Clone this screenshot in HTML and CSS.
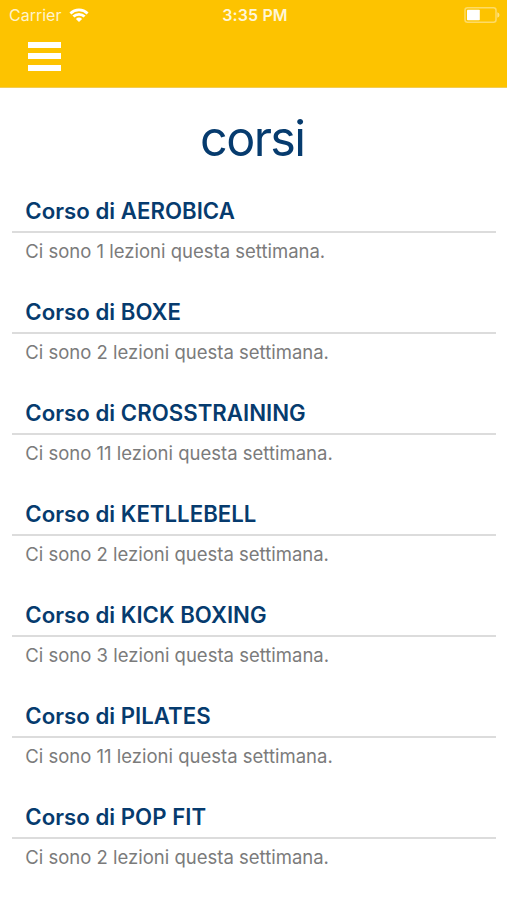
FILE: index.html
```html
<!DOCTYPE html>
<html lang="it">
<head>
<meta charset="utf-8">
<title>corsi</title>
<link rel="stylesheet" href="styles.css">
</head>
<body>
<header class="top">
  <div class="status">
    <div class="carrier"><span>Carrier</span>
      <svg class="wifi" width="20" height="14" viewBox="0 0 20 14"><path d="M10 14 6.9 10.9a4.5 4.5 0 0 1 6.2 0z" fill="#fff"/><path d="M4.4 8.6a8 8 0 0 1 11.2 0M1.4 5.4a12.4 12.4 0 0 1 17.2 0" fill="none" stroke="#fff" stroke-width="2.8"/></svg>
    </div>
    <div class="time">3:35 PM</div>
    <svg class="battery" width="36" height="16" viewBox="0 0 36 16"><rect x="1" y=".8" width="31" height="14.4" rx="2.5" fill="none" stroke="#fff" stroke-opacity=".4" stroke-width="1.5"/><rect x="3" y="2.7" width="12.8" height="10.6" rx=".8" fill="#fff"/><path d="M33.3 5.2q2.2.8 2.2 2.8t-2.2 2.8z" fill="#fff" fill-opacity=".5"/></svg>
  </div>
  <button class="menu" aria-label="Menu"><i></i><i></i><i></i></button>
</header>
<main>
  <h1>corsi</h1>
  <section class="course"><h2>Corso di AEROBICA</h2><p>Ci sono 1 lezioni questa settimana.</p></section>
  <section class="course"><h2>Corso di BOXE</h2><p>Ci sono 2 lezioni questa settimana.</p></section>
  <section class="course"><h2>Corso di CROSSTRAINING</h2><p>Ci sono 11 lezioni questa settimana.</p></section>
  <section class="course"><h2>Corso di KETLLEBELL</h2><p>Ci sono 2 lezioni questa settimana.</p></section>
  <section class="course"><h2>Corso di KICK BOXING</h2><p>Ci sono 3 lezioni questa settimana.</p></section>
  <section class="course"><h2>Corso di PILATES</h2><p>Ci sono 11 lezioni questa settimana.</p></section>
  <section class="course"><h2>Corso di POP FIT</h2><p>Ci sono 2 lezioni questa settimana.</p></section>
</main>
</body>
</html>
```
FILE: styles.css
```css
* { box-sizing: border-box; }
body { margin: 0; height: 900px; overflow: hidden; background: #fff; font-family: Inter, sans-serif; }
.top { height: 88px; background: #fdc300; border-bottom: 1px solid #f1cc55; }
.status { height: 30px; display: grid; grid-template-columns: 1fr auto 1fr; align-items: center; padding: 0 7px 0 9px; color: #fff; font-size: 16px; }
.carrier { display: flex; align-items: center; gap: 8px; color: #fff3cc; }
.wifi { margin-top: -1px; }
.time { padding-left: 1px; font-weight: 600; letter-spacing: .12px; color: #fff6d8; }
.battery { justify-self: end; }
.menu { display: flex; flex-direction: column; gap: 5.4px; margin: 12px 0 0 28px; padding: 0; border: 0; background: none; }
.menu i { width: 33px; height: 6px; background: #fff; }
h1 { margin: 0; height: 96px; padding-top: 22px; text-align: center; font-size: 48.5px; line-height: 58px; font-weight: 400; letter-spacing: -1.6px; text-indent: -2.5px; color: #063b6e; }
.course { height: 101.05px; padding: 0 11px 0 12px; }
h2 { margin: 0; height: 49px; padding: 12px 13.3px 0; border-bottom: 2px solid #dcdcdc; color: #063b6e; font-size: 22.2px; line-height: 30px; font-weight: 600; letter-spacing: .03px; }
p { margin: 0; padding: 6px 13.3px 0; color: #7b7b7b; font-size: 18.5px; line-height: 25px; }
```
